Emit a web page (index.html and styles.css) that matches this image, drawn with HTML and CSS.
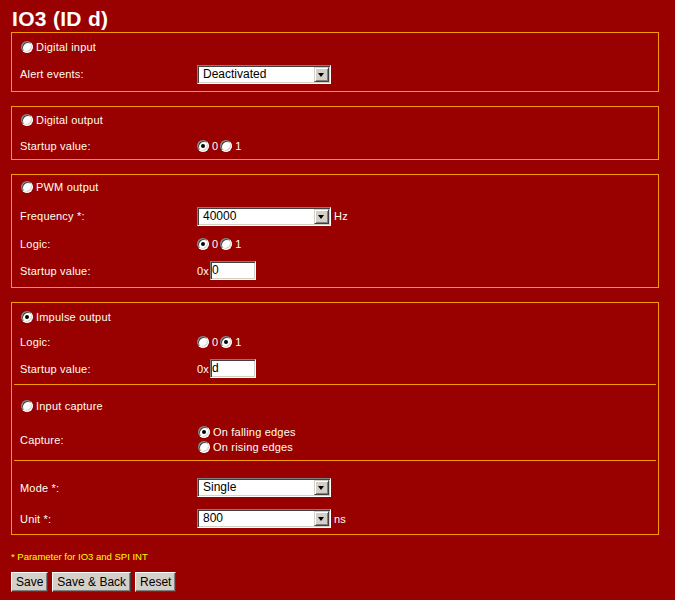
FILE: index.html
```html
<!DOCTYPE html>
<html>
<head>
<meta charset="utf-8">
<title>IO3 (ID d)</title>
<link rel="stylesheet" href="styles.css">
</head>
<body>
<div class="page">
  <h1 class="title">IO3 (ID d)</h1>

  <div class="box box1">
    <div class="row h27"><label class="opt head"><span class="radio"></span>Digital input</label></div>
    <div class="row h28">
      <span class="lbl">Alert events:</span>
      <div class="field"><div class="select"><span class="val">Deactivated</span><span class="arrow"></span></div></div>
    </div>
  </div>

  <div class="box box2">
    <div class="row h26"><label class="opt head"><span class="radio"></span>Digital output</label></div>
    <div class="row h25">
      <span class="lbl">Startup value:</span>
      <div class="field"><span class="opt"><span class="radio on"></span>0</span><span class="opt"><span class="radio"></span>1</span></div>
    </div>
  </div>

  <div class="box box3">
    <div class="row h24"><label class="opt head"><span class="radio"></span>PWM output</label></div>
    <div class="row h34">
      <span class="lbl">Frequency *:</span>
      <div class="field"><div class="select"><span class="val">40000</span><span class="arrow"></span></div><span class="unit">Hz</span></div>
    </div>
    <div class="row h22">
      <span class="lbl">Logic:</span>
      <div class="field"><span class="opt"><span class="radio on"></span>0</span><span class="opt"><span class="radio"></span>1</span></div>
    </div>
    <div class="row h31">
      <span class="lbl">Startup value:</span>
      <div class="field"><span class="prefix">0x</span><span class="tinput">0</span></div>
    </div>
  </div>

  <div class="box box4">
    <div class="section">
      <div class="row h27"><label class="opt head"><span class="radio on"></span>Impulse output</label></div>
      <div class="row h23">
        <span class="lbl">Logic:</span>
        <div class="field"><span class="opt"><span class="radio"></span>0</span><span class="opt"><span class="radio on"></span>1</span></div>
      </div>
      <div class="row h31">
        <span class="lbl">Startup value:</span>
        <div class="field"><span class="prefix">0x</span><span class="tinput">d</span></div>
      </div>
    </div>
    <div class="sep"></div>
    <div class="section sec-b">
      <div class="row h26"><label class="opt head"><span class="radio"></span>Input capture</label></div>
      <div class="row h41">
        <span class="lbl">Capture:</span>
        <div class="field stack">
          <span class="opt line"><span class="radio on"></span>On falling edges</span>
          <span class="opt line"><span class="radio"></span>On rising edges</span>
        </div>
      </div>
    </div>
    <div class="sep"></div>
    <div class="section sec-c">
      <div class="row h31">
        <span class="lbl">Mode *:</span>
        <div class="field"><div class="select"><span class="val">Single</span><span class="arrow"></span></div></div>
      </div>
      <div class="row h31">
        <span class="lbl">Unit *:</span>
        <div class="field"><div class="select"><span class="val">800</span><span class="arrow"></span></div><span class="unit">ns</span></div>
      </div>
    </div>
  </div>

  <p class="note">* Parameter for IO3 and SPI INT</p>

  <div class="buttons">
    <button class="btn">Save</button>
    <button class="btn">Save &amp; Back</button>
    <button class="btn">Reset</button>
  </div>
</div>
</body>
</html>
```

FILE: styles.css
```css
html, body {
  margin: 0;
  padding: 0;
  background: #990000;
}

body {
  font-family: "Liberation Sans", Arial, sans-serif;
  font-size: 11px;
  letter-spacing: 0.2px;
  color: #fffff0;
}

.page {
  padding: 0 11px;
}

.title {
  margin: 0 0 1px 0;
  padding: 7px 0 0 1px;
  font-size: 21px;
  line-height: 24px;
  font-weight: bold;
  letter-spacing: 0.3px;
  color: #ffffff;
}

.box {
  width: 646px;
  border: 1px solid #ff9900;
}

.box + .box {
  margin-top: 14px;
}

.box1 { padding-bottom: 3px; }
.box2 { padding-bottom: 1px; }
.box3 { padding-bottom: 1px; }

.row {
  display: grid;
  grid-template-columns: 177px auto;
  align-items: center;
  padding-left: 8px;
}

.h22 { height: 22px; }
.h23 { height: 23px; }
.h24 { height: 24px; }
.h25 { height: 25px; }
.h26 { height: 26px; }
.h27 { height: 27px; }
.h28 { height: 28px; }
.h31 { height: 31px; }
.h34 { height: 34px; }
.h41 { height: 41px; }

.sep {
  margin: 0 2px;
  border-top: 1px solid #ff9900;
}

.sec-b { padding-top: 8px; }
.sec-c { padding-top: 11px; }

.lbl {
  white-space: nowrap;
}

.field {
  display: flex;
  align-items: center;
}

.field.stack {
  flex-direction: column;
  align-items: flex-start;
}

.opt {
  display: inline-flex;
  align-items: center;
  margin-right: 2px;
  white-space: nowrap;
}

.opt.head {
  grid-column: 1 / 3;
  margin-left: 1px;
}

.opt.line {
  height: 15px;
  margin-left: 1px;
}

.radio {
  position: relative;
  display: inline-block;
  box-sizing: border-box;
  width: 12px;
  height: 12px;
  margin-right: 3px;
  border-radius: 50%;
  background: #ffffff;
  border: 1px solid;
  border-color: #808080 #ffffff #ffffff #808080;
  box-shadow: inset 1px 1px 0 #404040, inset -1px -1px 0 #d4d0c8;
}

.radio.on::after {
  content: "";
  position: absolute;
  left: 3px;
  top: 3px;
  width: 4px;
  height: 4px;
  border-radius: 50%;
  background: #000000;
}

.select {
  display: flex;
  box-sizing: border-box;
  width: 134px;
  height: 19px;
  background: #ffffff;
  border: 1px solid;
  border-color: #808080 #ffffff #ffffff #808080;
  box-shadow: inset 1px 1px 0 #404040, inset -1px -1px 0 #d4d0c8;
  padding: 1px;
}

.select .val {
  flex: 1;
  padding-left: 4px;
  font-size: 12px;
  line-height: 15px;
  letter-spacing: 0;
  color: #000000;
}

.arrow {
  position: relative;
  box-sizing: border-box;
  width: 15px;
  height: 15px;
  background: #d4d0c8;
  border: 1px solid;
  border-color: #d4d0c8 #404040 #404040 #d4d0c8;
  box-shadow: inset 1px 1px 0 #ffffff, inset -1px -1px 0 #808080;
}

.arrow::after {
  content: "";
  position: absolute;
  left: 3px;
  top: 5px;
  border-left: 3.5px solid transparent;
  border-right: 3.5px solid transparent;
  border-top: 4px solid #000000;
}

.unit {
  margin-left: 3px;
}

.prefix {
  margin-right: 1px;
}

.tinput {
  box-sizing: border-box;
  width: 46px;
  height: 19px;
  padding-left: 1px;
  background: #ffffff;
  border: 1px solid;
  border-color: #808080 #ffffff #ffffff #808080;
  box-shadow: inset 1px 1px 0 #404040, inset -1px -1px 0 #d4d0c8;
  font-size: 12px;
  line-height: 17px;
  letter-spacing: 0;
  color: #000000;
}

.note {
  margin: 16px 0 0 0;
  font-size: 9.5px;
  line-height: 12px;
  letter-spacing: 0;
  color: #ffff00;
}

.buttons {
  display: flex;
  gap: 4px;
  margin-top: 9px;
}

.btn {
  box-sizing: border-box;
  height: 20px;
  padding: 0 4px;
  margin: 0;
  font-family: "Liberation Sans", Arial, sans-serif;
  font-size: 12px;
  line-height: 16px;
  color: #000000;
  background: #d4d0c8;
  border: 1px solid;
  border-color: #ffffff #404040 #404040 #ffffff;
  box-shadow: inset -1px -1px 0 #808080, inset 1px 1px 0 #d4d0c8;
  border-radius: 0;
}
```
